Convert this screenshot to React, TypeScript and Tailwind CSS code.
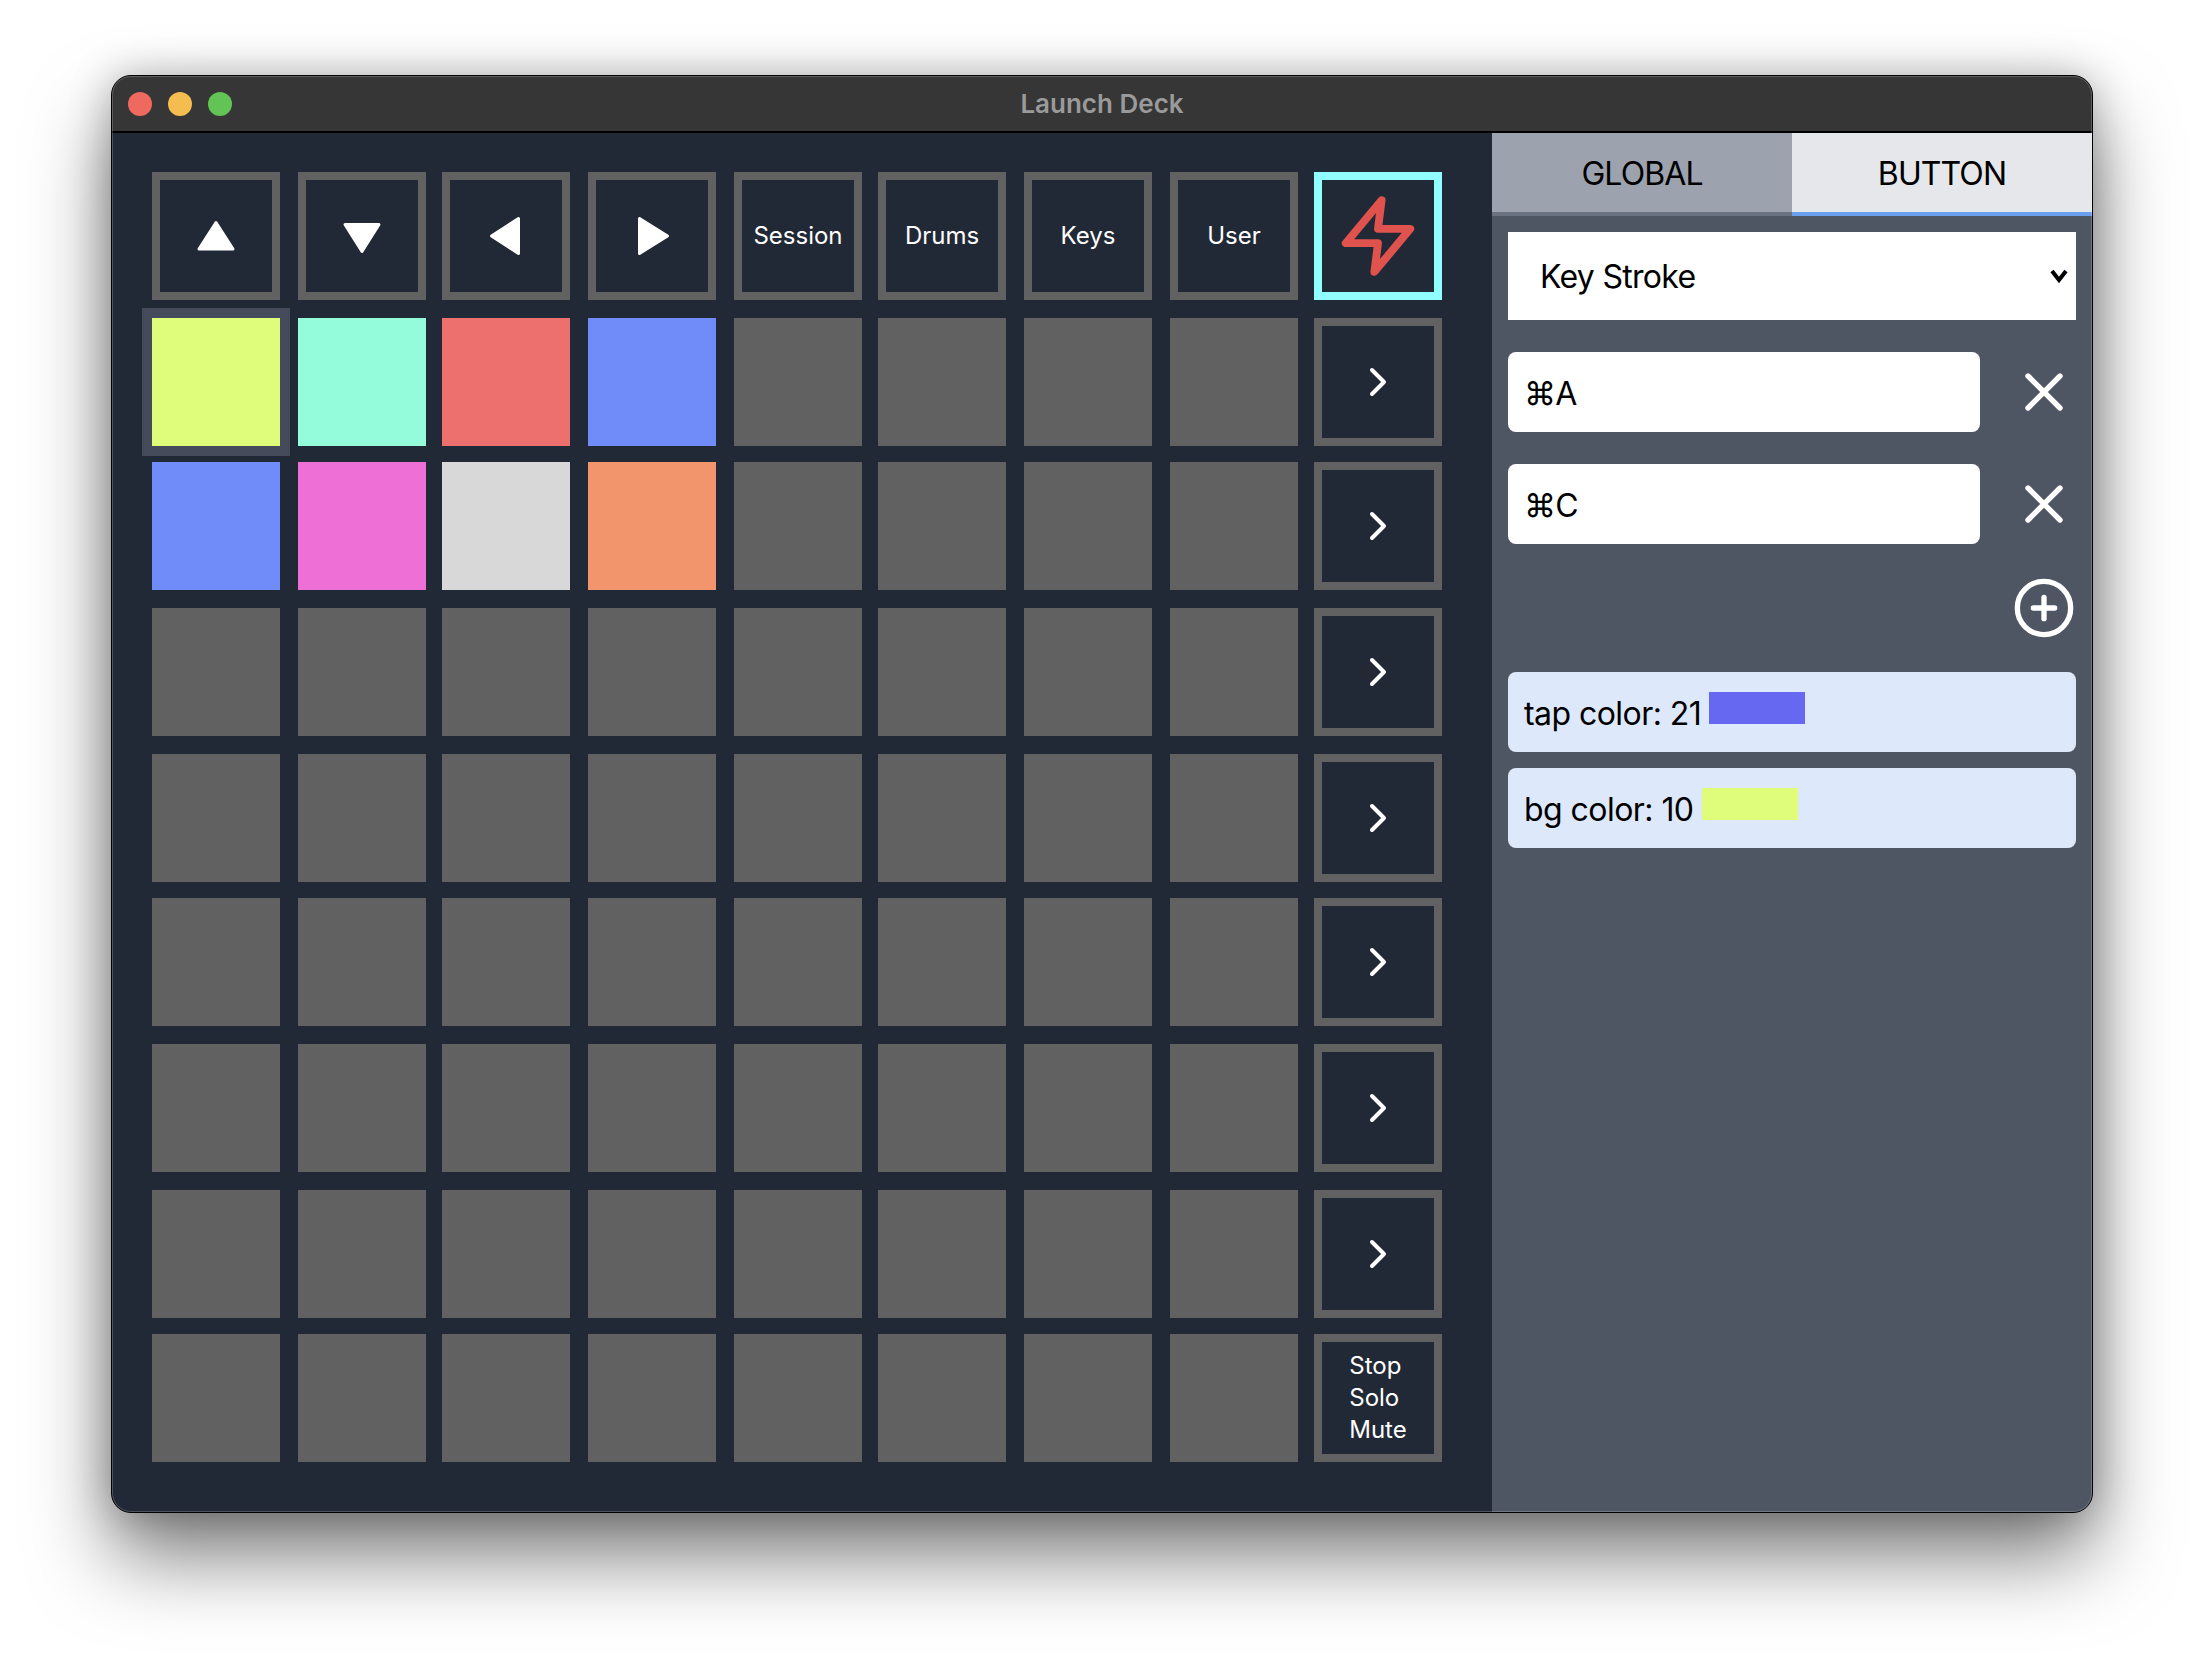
import { ChevronRight, CirclePlus, X } from "lucide-react";

const fontSans = "font-['Inter','Noto_Sans',sans-serif]";

const litPads: Record<number, string> = {
  0: "bg-[#dffd7b]",
  1: "bg-[#95fcdb]",
  2: "bg-[#ed6f6e]",
  3: "bg-[#6f8cf9]",
  9: "bg-[#6f8cf9]",
  10: "bg-[#ee6fd5]",
  11: "bg-[#d8d8d8]",
  12: "bg-[#f2956d]",
};

function Triangle({ points }: { points: string }) {
  return (
    <svg width="48" height="48" viewBox="0 0 48 48" className="text-white">
      <polygon points={points} fill="currentColor" stroke="currentColor" strokeWidth="3" strokeLinejoin="round" />
    </svg>
  );
}

function Outlined({ children, active }: { children: React.ReactNode; active?: boolean }) {
  return (
    <div
      className={`w-32 h-32 border-8 flex items-center justify-center text-white text-2xl ${
        active ? "border-[#90fdfe]" : "border-[#616161]"
      }`}
    >
      {children}
    </div>
  );
}

const topRow = [
  <Triangle key="up" points="24,10.500 41,37 7,37" />,
  <Triangle key="down" points="24,39.500 41,12.500 7,12.500" />,
  <Triangle key="left" points="9.500,24 36.500,6.500 36.500,41.500" />,
  <Triangle key="right" points="39.500,24 11.500,6.500 11.500,41.500" />,
  "Session",
  "Drums",
  "Keys",
  "User",
];

function Pad({ index }: { index: number }) {
  return (
    <div
      className={`w-32 h-32 ${litPads[index] ?? "bg-[#616161]"} ${
        index === 0 ? "ring-[10px] ring-[#454b5a]" : ""
      }`}
    />
  );
}

export default function App() {
  const pads = Array.from({ length: 8 }, (_, row) => row);

  return (
    <div className={`w-[2204px] h-[1660px] bg-white overflow-hidden pt-[75px] pl-[111px] ${fontSans}`}>
      <div className="relative w-[1982px] h-[1438px] rounded-[20px] border border-black bg-[#222936] shadow-[0_44px_80px_rgba(0,0,0,0.5),0_0_40px_rgba(0,0,0,0.25)] after:absolute after:inset-0 after:rounded-[19px] after:border after:border-white/20 after:pointer-events-none">
        <div className="flex flex-col h-full rounded-[19px] overflow-hidden">
          <div className="relative h-[57px] shrink-0 bg-[#363636] border-b-2 border-black flex items-center pl-[16px] gap-4">
            <div className="w-6 h-6 rounded-full bg-[#ee6a5f]" />
            <div className="w-6 h-6 rounded-full bg-[#f5bd4f]" />
            <div className="w-6 h-6 rounded-full bg-[#61c454]" />
            <div className="absolute inset-0 flex items-center justify-center text-[26px] font-semibold text-[#9a9a9a]">
              Launch Deck
            </div>
          </div>

          <div className="flex flex-1">
            <div className="w-[1380px] pl-10 pt-[39px]">
              <div className="grid grid-cols-[146px_144px_146px_146px_144px_146px_146px_144px_128px] grid-rows-[146px_144px_146px_146px_144px_146px_146px_144px_128px]">
                {topRow.map((item, i) => (
                  <Outlined key={i}>{item}</Outlined>
                ))}
                <Outlined active>
                  <svg width="86" height="86" viewBox="0 0 24 24" fill="none" stroke="#e0524e" strokeWidth="2.2" strokeLinecap="round" strokeLinejoin="round">
                    <polygon points="13 2 3 14 12 14 11 22 21 10 12 10 13 2" />
                  </svg>
                </Outlined>

                {pads.map((row) => (
                  <div key={row} className="contents">
                    {pads.map((col) => (
                      <Pad key={col} index={row * 9 + col} />
                    ))}
                    {row < 7 ? (
                      <Outlined>
                        <ChevronRight size={48} strokeWidth={2} />
                      </Outlined>
                    ) : (
                      <Outlined>
                        <div className="leading-8">
                          Stop
                          <br />
                          Solo
                          <br />
                          Mute
                        </div>
                      </Outlined>
                    )}
                  </div>
                ))}
              </div>
            </div>

            <div className="w-[600px] bg-[#4e5563] flex flex-col">
              <div className="flex text-[32px] tracking-[-0.9px] text-black">
                <div className="w-[300px] h-[83px] pt-[2px] bg-[#9ca3af] border-b-4 border-[#6b7280] flex items-center justify-center">
                  GLOBAL
                </div>
                <div className="w-[300px] h-[83px] pt-[2px] bg-[#e5e7eb] border-b-4 border-[#6b9ff0] flex items-center justify-center">
                  BUTTON
                </div>
              </div>

              <div className="px-4 pt-4 flex flex-col">
                <div className="relative">
                  <select className="w-full h-[88px] bg-white text-black text-[32px] tracking-[-0.7px] pl-[32px] pt-[2px] appearance-none outline-none rounded-none">
                    <option>Key Stroke</option>
                  </select>
                  <svg className="absolute right-[8px] top-[37px]" width="18" height="14" viewBox="0 0 18 14" fill="none" stroke="black" strokeWidth="4">
                    <path d="M2 2 L9 11 L16 2" />
                  </svg>
                </div>

                {["⌘A", "⌘C"].map((keys) => (
                  <div key={keys} className="flex items-center justify-between mt-8">
                    <input
                      readOnly
                      value={keys}
                      className="w-[472px] h-20 rounded-lg bg-white text-black text-[32px] tracking-[-0.8px] pl-4 pt-[2px] outline-none"
                    />
                    <X size={64} strokeWidth={2} className="text-white" />
                  </div>
                ))}

                <div className="flex justify-end mt-8 text-white">
                  <CirclePlus size={64} strokeWidth={2} />
                </div>

                <div className="mt-8 h-20 rounded-lg bg-[#dde8fb] px-4 pt-[18px] text-[32px] leading-[48px] tracking-[-0.55px] text-black">
                  tap color: 21
                  <span className="inline-block align-top w-24 h-8 ml-2 mt-[2px] bg-[#6768f2]" />
                </div>
                <div className="mt-4 h-20 rounded-lg bg-[#dde8fb] px-4 pt-[18px] text-[32px] leading-[48px] tracking-[-0.55px] text-black">
                  bg color: 10
                  <span className="inline-block align-top w-24 h-8 ml-2 mt-[2px] bg-[#dffd7b]" />
                </div>
              </div>
            </div>
          </div>
        </div>
      </div>
    </div>
  );
}
